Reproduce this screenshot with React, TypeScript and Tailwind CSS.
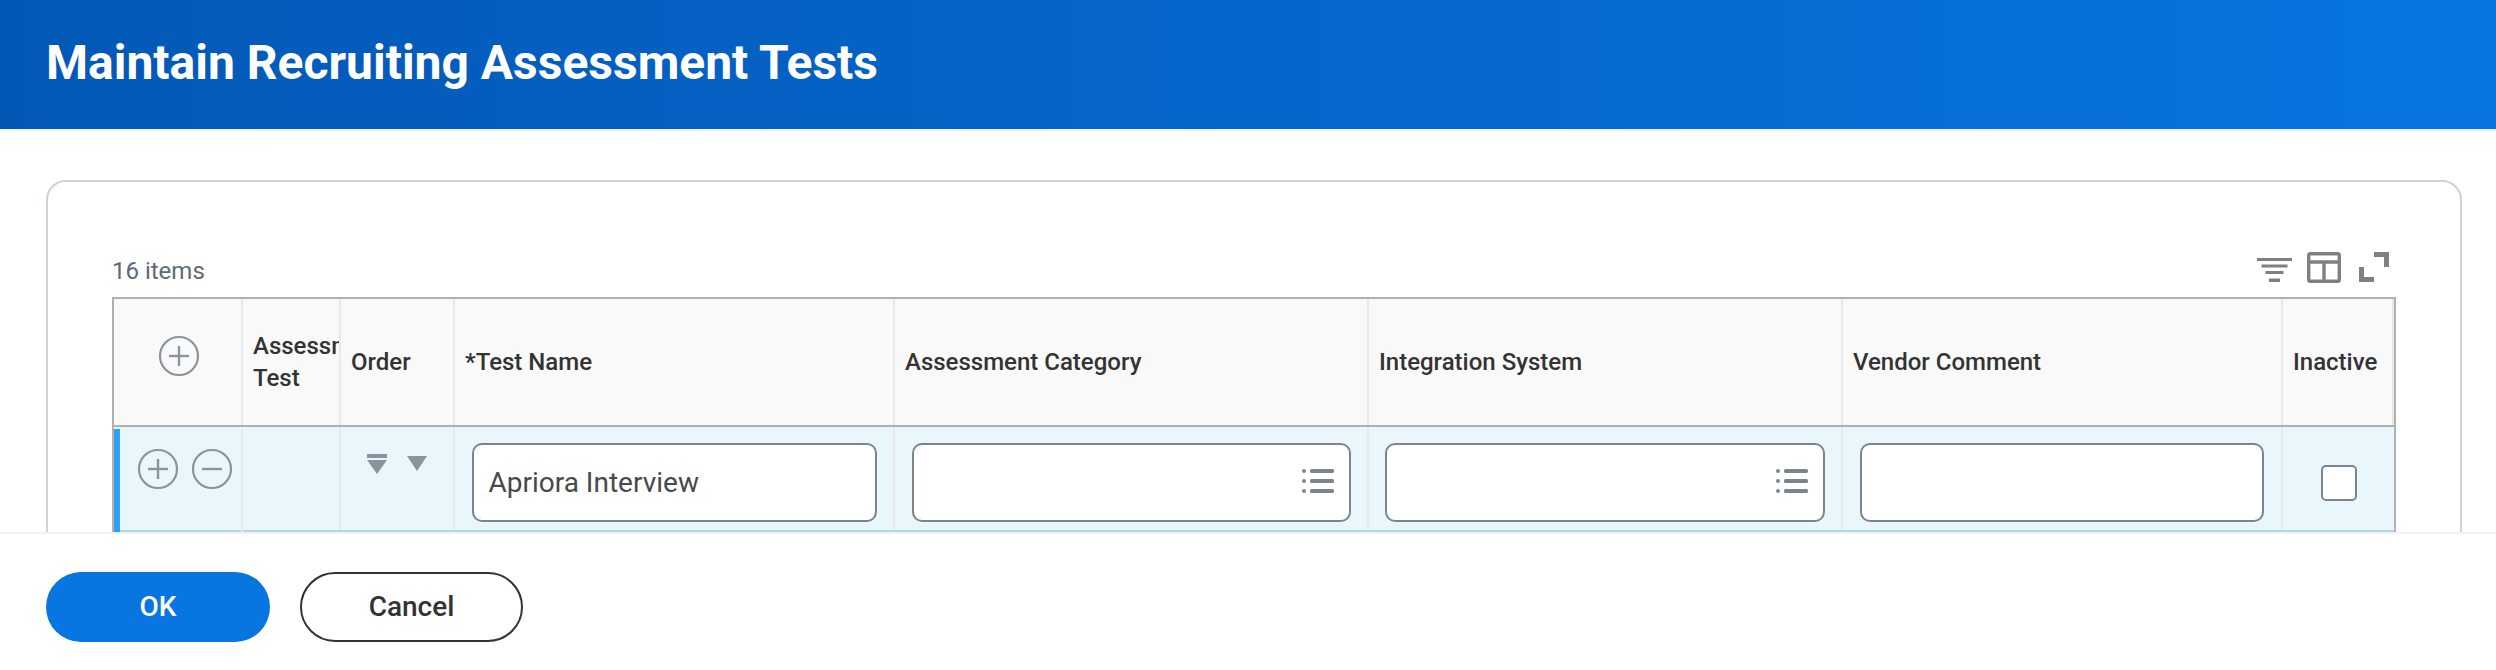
import React from "react";

const Circle = ({ minus = false }: { minus?: boolean }) => (
  <svg width="42" height="42" viewBox="0 0 42 42" fill="none" stroke="#8a949e" strokeWidth="2.2">
    <circle cx="21" cy="21" r="19" />
    <path d="M11 21h20" strokeWidth="2.4" />
    {!minus && <path d="M21 11v20" strokeWidth="2.4" />}
  </svg>
);

const ListIcon = () => (
  <svg width="32" height="24" viewBox="0 0 32 24" fill="#7b858f" className="mb-[3px]">
    <circle cx="2" cy="2" r="2" />
    <circle cx="2" cy="12" r="2" />
    <circle cx="2" cy="22" r="2" />
    <rect x="8" y="0" width="24" height="4" rx="1.5" />
    <rect x="8" y="10" width="24" height="4" rx="1.5" />
    <rect x="8" y="20" width="24" height="4" rx="1.5" />
  </svg>
);

const headCell = "flex items-center border-r-2 border-[#e8e8e8] px-[10px] text-[24px] leading-[32px] font-medium text-[#333333] overflow-hidden";
const rowCell = "border-r-2 border-[#e8e8e8] h-full";

const Field = ({ value, list, cls }: { value?: string; list?: boolean; cls: string }) => (
  <div className={`${rowCell} pt-[16px] flex justify-center`}>
    <div className={`${cls} h-[79px] bg-white border-2 border-[#7b858f] rounded-[10px] flex items-center justify-between pl-[15px] pr-[15px] text-[28px] text-[#494949]`}>
      <span>{value}</span>
      {list && <ListIcon />}
    </div>
  </div>
);

export default function App() {
  return (
    <div className="w-[2496px] h-[670px] flex flex-col overflow-hidden bg-white font-['Roboto',sans-serif]">
      <header className="h-[129px] shrink-0 flex items-center pl-[46px] bg-gradient-to-r from-[#0358b6] to-[#0875e1]">
        <h1 className="text-[48px] font-bold text-white leading-none pb-[4px]">Maintain Recruiting Assessment Tests</h1>
      </header>
      <main className="h-[403px] shrink-0 overflow-hidden border-t-2 border-[#f0f1f2] pt-[49px] pl-[46px]">
        <section className="w-[2416px] h-[500px] border-2 border-[#ced3d9] rounded-[20px] pl-[64px] pt-[69px]">
          <div className="w-[2284px] h-[46px] flex items-start justify-between">
            <span className="text-[24px] leading-[28px] mt-[6px] text-[#5e6a75]">16 items</span>
            <div className="flex items-start pt-[1px] pr-[7px]">
              <svg width="35" height="24" viewBox="0 0 35 24" fill="#808080" className="mt-[6px] mr-[15px]">
                <rect x="0" y="0" width="35" height="3" />
                <rect x="4.5" y="6.5" width="26" height="3" />
                <rect x="8.5" y="13" width="18" height="3" />
                <rect x="12" y="20.5" width="11" height="3.5" />
              </svg>
              <svg width="34" height="31" viewBox="0 0 34 31" fill="none" stroke="#808080" strokeWidth="3.4" className="mr-[18px]">
                <rect x="1.7" y="1.7" width="30.6" height="27.6" rx="1.5" />
                <path d="M2 10h30M17 10v20" />
              </svg>
              <svg width="30" height="30" viewBox="0 0 30 30" fill="#808080">
                <path d="M15 0h15v15h-5V5H15z" />
                <path d="M0 15h5v10h10v5H0z" />
              </svg>
            </div>
          </div>
          <div className="w-[2284px] border-2 border-[#b0b0b0] border-b-0">
            <div className="grid grid-cols-[129px_98px_114px_440px_474px_474px_440px_111px] h-[128px] bg-[#f9f9f9] border-b-2 border-[#b0b0b0]">
              <div className="flex items-center justify-center border-r-2 border-[#e8e8e8] pb-[12px] pl-[2px]">
                <Circle />
              </div>
              <div className={`${headCell} whitespace-pre-line`}>{"Assessment\nTest"}</div>
              <div className={headCell}>Order</div>
              <div className={headCell}>*Test Name</div>
              <div className={headCell}>Assessment Category</div>
              <div className={headCell}>Integration System</div>
              <div className={headCell}>Vendor Comment</div>
              <div className={`${headCell} border-r-0`}>Inactive</div>
            </div>
            <div className="grid grid-cols-[129px_98px_114px_440px_474px_474px_440px_111px] h-[105px] bg-[#e9f6fc] border-b-2 border-[#b4d6e6] items-start">
              <div className={`${rowCell} border-l-[6px] border-l-[#2f9ff5] pl-[17px] pt-[19px] mt-[2px] flex gap-[12px]`}>
                <Circle />
                <Circle minus />
              </div>
              <div className={rowCell} />
              <div className={`${rowCell} pl-[26px] pt-[27px] flex items-start gap-[20px]`}>
                <svg width="20" height="20" viewBox="0 0 20 20" fill="#8a949e">
                  <rect x="0" y="0" width="20" height="4" />
                  <path d="M0 6h20L10 20z" />
                </svg>
                <svg width="20" height="15" viewBox="0 0 20 15" fill="#8a949e" className="mt-[2px]">
                  <path d="M0 0h20L10 15z" />
                </svg>
              </div>
              <Field cls="w-[405px]" value="Apriora Interview" />
              <Field cls="w-[439px]" list />
              <Field cls="w-[440px]" list />
              <Field cls="w-[404px]" />
              <div className="h-full flex justify-center pt-[38px]">
                <div className="w-[36px] h-[36px] bg-white border-2 border-[#7b858f] rounded-[5px]" />
              </div>
            </div>
          </div>
        </section>
      </main>
      <footer className="flex-1 border-t-2 border-[#f0f1f2] pt-[38px] pl-[46px] flex items-start gap-[30px]">
        <button className="w-[224px] h-[70px] rounded-full bg-[#0875e1] text-white text-[28px] font-medium">OK</button>
        <button className="w-[223px] h-[70px] rounded-full bg-white border-2 border-[#333333] text-[#333333] text-[28px] font-medium">Cancel</button>
      </footer>
    </div>
  );
}
